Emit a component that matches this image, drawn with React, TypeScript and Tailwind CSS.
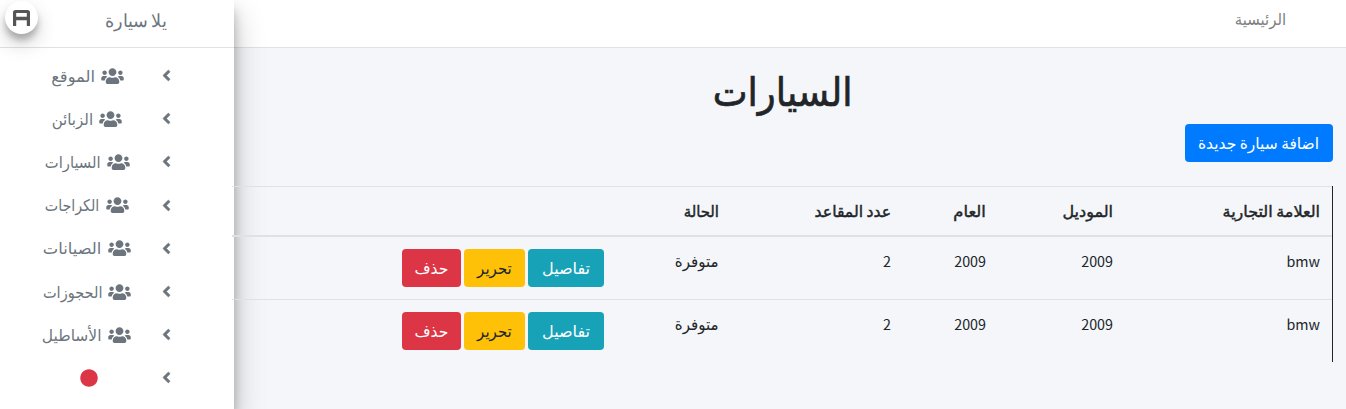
import { FaUsers, FaAngleLeft, FaCircle } from 'react-icons/fa';

const links = [
  { label: 'الموقع', width: 'w-[44px]', scale: 'scale-x-[1.02]' },
  { label: 'الزبائن', width: 'w-[41px]', scale: 'scale-x-[0.94]' },
  { label: 'السيارات', width: 'w-[56px]', scale: 'scale-x-[0.92]' },
  { label: 'الكراجات', width: 'w-[54px]', scale: 'scale-x-[0.89]' },
  { label: 'الصيانات', width: 'w-[58px]', scale: 'scale-x-[1.02]' },
  { label: 'الحجوزات', width: 'w-[59px]', scale: 'scale-x-[0.91]' },
  { label: 'الأساطيل', width: 'w-[59px]', scale: 'scale-x-[0.97]' },
];

function Chevron() {
  return <FaAngleLeft className="h-[17px] w-[11px] shrink-0 stroke-current [stroke-width:14]" />;
}

function Sidebar() {
  return (
    <aside className="relative z-10 h-[409px] w-[234px] shrink-0 bg-white text-[#6c757d] shadow-[0_14px_28px_rgba(0,0,0,0.25),0_10px_10px_rgba(0,0,0,0.22)]">
      <div className="flex h-12 items-start border-b border-[#dee2e6]">
        <div className="ml-[5px] mt-[1px] flex h-[33px] w-[33px] items-center justify-center rounded-full bg-white shadow-[0_10px_20px_rgba(0,0,0,0.19),0_6px_6px_rgba(0,0,0,0.23)]">
          <svg viewBox="0 0 17 16" className="h-4 w-[17px]">
            <path d="M2.500 0h12A2.500 2.500 0 0 1 17 2.500V16h-3.200v-5.800H3.200V16H0V2.500A2.500 2.500 0 0 1 2.500 0zM3.200 3v3.700h10.600V3z" fill="#555" fillRule="evenodd" />
          </svg>
        </div>
        <div dir="rtl" className="ml-[67px] mt-[5px] w-[62px] whitespace-nowrap text-[18px] font-light leading-7">
          <span className="inline-block origin-right scale-x-[0.98]">يلا سيارة</span>
        </div>
      </div>
      <nav dir="rtl" className="pt-[6px]">
        {links.map((l) => (
          <a key={l.label} className="flex h-[43.200px] items-center pr-[62.500px]">
            <Chevron />
            <span className="flex w-[147px] items-center justify-center gap-[6px] whitespace-nowrap">
              <FaUsers className="h-[18px] w-[23px] shrink-0" />
              <span className={`pb-[2px] ${l.width}`}>
                <span className={`inline-block origin-right ${l.scale}`}>{l.label}</span>
              </span>
            </span>
          </a>
        ))}
        <a className="flex h-[43.200px] items-center pr-[62.500px]">
          <Chevron />
          <span className="flex w-[143px] justify-center">
            <FaCircle className="h-[18px] w-[18px] text-[#dc3545]" />
          </span>
        </a>
      </nav>
    </aside>
  );
}

const btn = 'flex h-[38px] items-center justify-center whitespace-nowrap rounded-[4px] text-[16px]';
const cols = 'grid grid-cols-[207px_127px_95px_172px_115px_1fr]';
const squeeze = 'inline-block origin-right';

function Row() {
  return (
    <div className={`${cols} h-[63px] border-t border-[#dee2e6] pr-3 pt-3 leading-6`}>
      <div className="text-[14.300px]">bmw</div>
      <div className="text-[14.300px]">2009</div>
      <div className="text-[14.300px]">2009</div>
      <div className="text-[14.300px]">2</div>
      <div className="-mt-px">
        <span className={`${squeeze} scale-x-[0.94]`}>متوفرة</span>
      </div>
      <div className="flex gap-[3px]">
        <span className={`${btn} w-[76px] bg-[#17a2b8] pb-[3px] text-white`}>تفاصيل</span>
        <span className={`${btn} w-[61px] bg-[#ffc107] pb-[3px]`}>
          <span className="scale-x-[0.94]">تحرير</span>
        </span>
        <span className={`${btn} w-[59px] bg-[#dc3545] pb-[3px] text-white`}>
          <span className="scale-x-[0.97]">حذف</span>
        </span>
      </div>
    </div>
  );
}

const heads = [
  { label: 'العلامة التجارية', scale: 'scale-x-[1]' },
  { label: 'الموديل', scale: 'scale-x-[1]' },
  { label: 'العام', scale: 'scale-x-[1.02]' },
  { label: 'عدد المقاعد', scale: 'scale-x-[0.98]' },
  { label: 'الحالة', scale: 'scale-x-[0.93]' },
];

export default function App() {
  return (
    <div className="flex h-[409px] w-[1346px] overflow-hidden bg-[#f4f6f9] font-['Noto_Sans_CJK_SC','Noto_Sans','DejaVu_Sans',sans-serif] text-[16px] text-[#212529]">
      <Sidebar />
      <main dir="rtl" className="w-[1112px]">
        <header className="h-12 border-b border-[#dee2e6] bg-white pr-[60px] pt-[6px] text-[16px] leading-6 text-[#808080]">
          <span className={`${squeeze} scale-x-[0.93]`}>الرئيسية</span>
        </header>
        <section className="relative z-20 -ml-[2px] pr-[13px] pt-[13px]">
          <h1 className="h-[63px] text-center text-[40px] font-normal leading-[56px] [-webkit-text-stroke:0.7px_#212529]">
            <span className="inline-block scale-x-[0.925]">السيارات</span>
          </h1>
          <button className={`${btn} w-[148px] bg-[#007bff] pb-[2px] text-white`}>
            <span className="scale-x-[0.968]">اضافة سيارة جديدة</span>
          </button>
          <div className="mt-6 border-r border-[#212529]">
            <div className={`${cols} h-[49px] border-t border-[#dee2e6] pr-3 pt-[11px] leading-6 [-webkit-text-stroke:0.45px_#212529]`}>
              {heads.map((h) => (
                <div key={h.label}>
                  <span className={`${squeeze} ${h.scale}`}>{h.label}</span>
                </div>
              ))}
            </div>
            <div className="border-t border-[#dee2e6]">
              <Row />
              <Row />
            </div>
          </div>
        </section>
      </main>
    </div>
  );
}
